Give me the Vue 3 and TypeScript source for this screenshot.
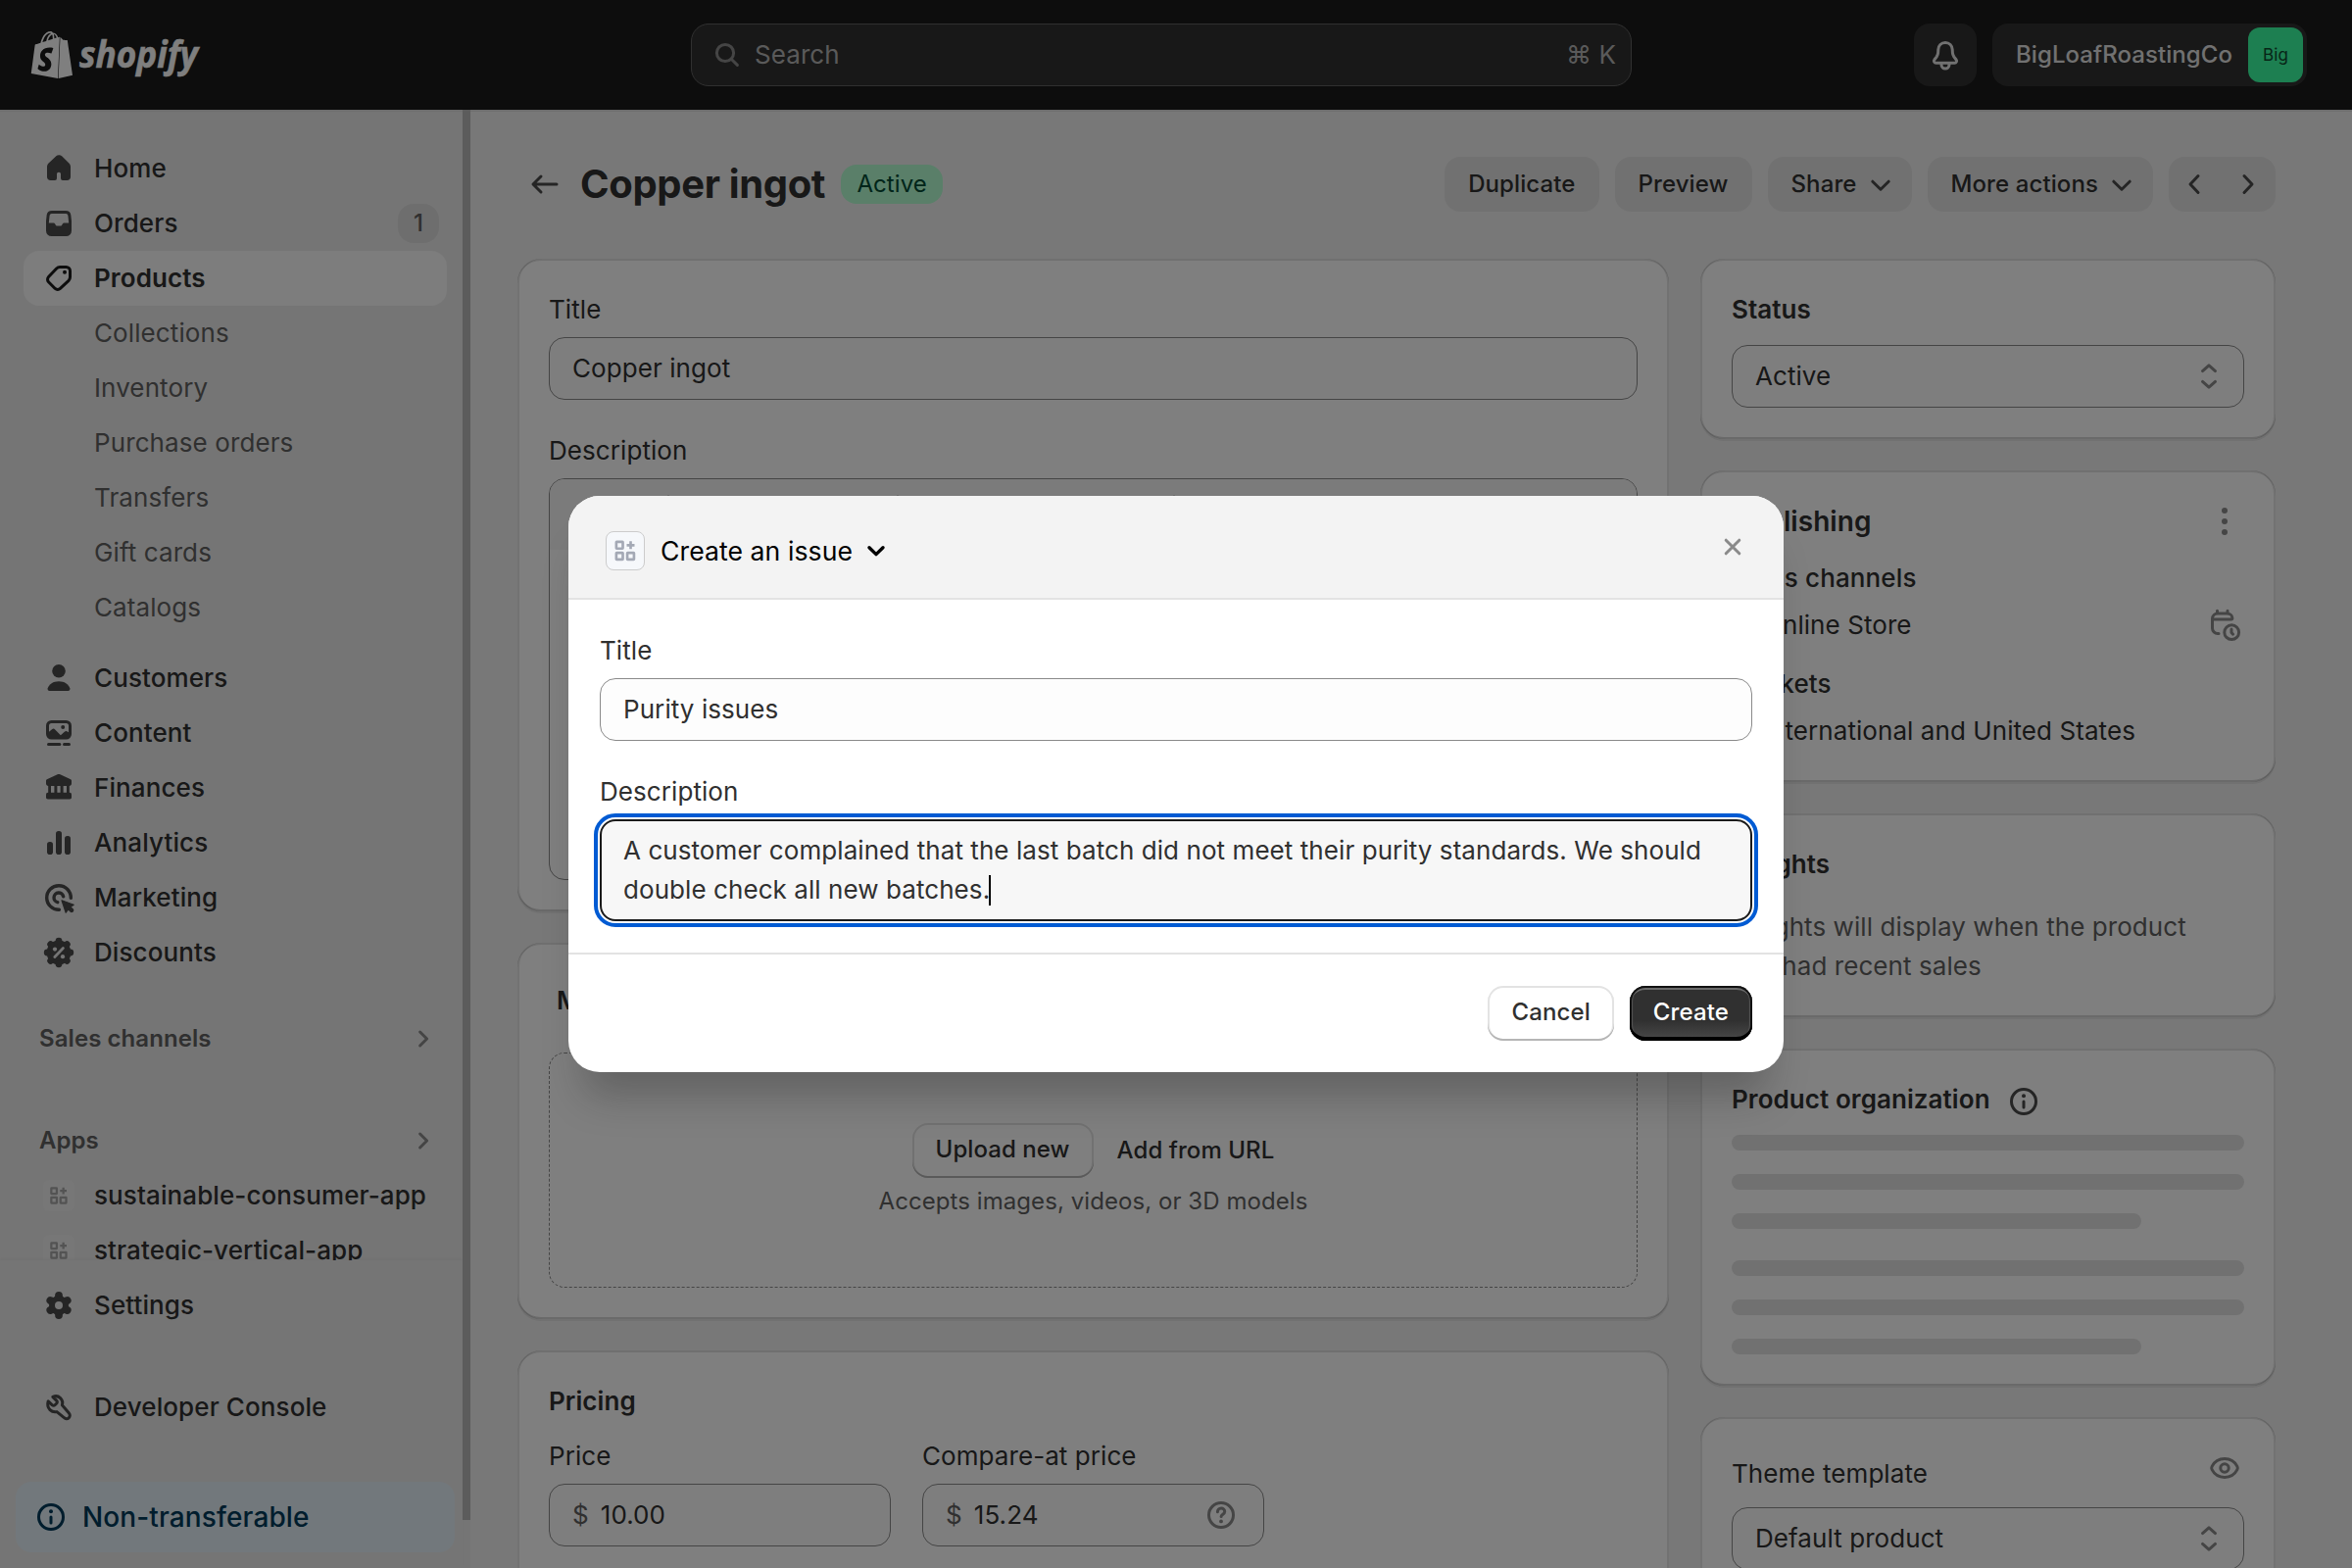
<script setup lang="ts">
interface NavItem {
  label: string
  icon?: string
  badge?: string
  active?: boolean
}

const stroke = 'fill="none" stroke="currentColor" stroke-width="1.5" stroke-linecap="round" stroke-linejoin="round"'
const bumps = [0, 45, 90, 135, 180, 225, 270, 315]
  .map((a) => `<circle cx="10" cy="4.1" r="1.7" transform="rotate(${a} 10 10)"/>`)
  .join('')
const teeth = [0, 60, 120]
  .map((a) => `<path d="M10 5v10" transform="rotate(${a} 10 10)"/>`)
  .join('')

const icons: Record<string, string> = {
  home: '<path fill="currentColor" d="M10 3.1c-.5 0-1 .2-1.35.55L4.8 7.3C4.3 7.8 4 8.45 4 9.15v5.1c0 1 .75 1.75 1.75 1.75H8a1 1 0 0 0 1-1v-2.2a.9.9 0 0 1 .9-.9h.2a.9.9 0 0 1 .9.9V15a1 1 0 0 0 1 1h2.25c1 0 1.75-.75 1.75-1.75v-5.1c0-.7-.3-1.35-.8-1.85l-3.65-3.65A1.9 1.9 0 0 0 10 3.1z"/>',
  orders: '<path fill="currentColor" fill-rule="evenodd" d="M6.4 3.5h7.2a2.6 2.6 0 0 1 2.55 2.1l.35 3.2v4.95a2.75 2.75 0 0 1-2.75 2.75h-7.5a2.75 2.75 0 0 1-2.75-2.75V8.8l.35-3.2A2.6 2.6 0 0 1 6.4 3.5zm0 1.5a1.1 1.1 0 0 0-1.1.95L4.9 9.7h2.3c.55 0 .85.35 1.05.8.2.45.5.8 1.05.8h1.4c.55 0 .85-.35 1.05-.8.2-.45.5-.8 1.05-.8h2.3l-.4-3.75A1.1 1.1 0 0 0 13.6 5z"/>',
  products: `<path ${stroke} d="M10.6 4.25h3.15a2 2 0 0 1 2 2v3.15a2.5 2.5 0 0 1-.73 1.77l-4.3 4.05a1.9 1.9 0 0 1-2.6 0l-3.34-3.34a1.9 1.9 0 0 1 0-2.6l4.05-4.3a2.5 2.5 0 0 1 1.77-.73z"/><circle cx="13" cy="6.9" r="1" fill="currentColor"/>`,
  customers: '<g fill="currentColor"><circle cx="10" cy="6.4" r="3.4"/><path d="M10 11.6c-2.9 0-4.9 1.4-5.65 3.5-.25.8.25 1.4.95 1.4h9.4c.7 0 1.2-.6.95-1.4-.75-2.1-2.75-3.5-5.65-3.5z"/></g>',
  content: '<g fill="currentColor"><path fill-rule="evenodd" d="M6.25 3.5h7.5a2.75 2.75 0 0 1 2.75 2.75v4.25a2.75 2.75 0 0 1-2.75 2.75h-7.5A2.75 2.75 0 0 1 3.5 10.5V6.25A2.75 2.75 0 0 1 6.25 3.5zM6.25 5A1.25 1.25 0 0 0 5 6.25v3.1l1.5-1.2a1.15 1.15 0 0 1 1.6.1l2.85 2.9 1.95-1.8a1.2 1.2 0 0 1 1.5-.1l.6.4V6.25A1.25 1.25 0 0 0 13.75 5z"/><circle cx="12.1" cy="6.95" r="1"/><rect x="4" y="15" width="7.2" height="1.5" rx=".75"/><rect x="12" y="15" width="4" height="1.5" rx=".75"/></g>',
  finances: '<g fill="currentColor"><path d="M10 3c.25 0 .5.05.7.15l5.1 2.3c.45.2.7.55.7.95v1.35c0 .7-.5 1.25-1.2 1.25H4.7c-.7 0-1.2-.55-1.2-1.25V6.4c0-.4.25-.75.7-.95l5.1-2.3c.2-.1.45-.15.7-.15z"/><rect x="4.6" y="8.5" width="1.4" height="5"/><rect x="7.7" y="8.5" width="1.5" height="5"/><rect x="10.8" y="8.5" width="1.5" height="5"/><rect x="14" y="8.5" width="1.4" height="5"/><rect x="3.5" y="12.4" width="13" height="3.4" rx=".9"/></g>',
  analytics: '<g fill="currentColor"><rect x="4" y="9.5" width="3" height="6.5" rx="1.4"/><rect x="8.5" y="4" width="3" height="12" rx="1.4"/><rect x="13" y="6.5" width="3" height="9.5" rx="1.4"/></g>',
  marketing: '<g fill="none" stroke="currentColor" stroke-width="1.7" stroke-linecap="round"><path d="M16.15 10.2A6.15 6.15 0 1 0 10.2 16.15"/><path d="M12.35 9.4A2.45 2.45 0 1 0 9.4 12.35"/></g><path fill="currentColor" stroke="currentColor" stroke-width=".6" stroke-linejoin="round" d="M11.5 11.4l6.1 2.2-1.7 1.1 1.3 1.3c.6.6-.5 1.7-1.1 1.1l-1.3-1.2-1.2 1.7z"/>',
  discounts: `<g fill="currentColor"><circle cx="10" cy="10" r="6.2"/>${bumps}</g><g fill="#ebebeb"><path d="M7.9 12.2l4.3-4.4" stroke="#ebebeb" stroke-width="1.4" stroke-linecap="round"/><circle cx="8" cy="8.3" r="1.05"/><circle cx="12" cy="12.1" r="1.05"/></g>`,
  settings: `<g fill="none" stroke="currentColor" stroke-width="3.9" stroke-linecap="round">${teeth}</g><circle cx="10" cy="10" r="5" fill="currentColor"/><circle cx="10" cy="10" r="2" fill="#ebebeb"/>`,
  wrench: `<path ${stroke} d="M6.9 4.7l2 2a.9.9 0 0 1 0 1.3l-.9.9a.9.9 0 0 1-1.3 0l-2.1-2c-.55 1.8-.2 3.3.9 4.4 1 1 2.3 1.25 3.5 1l3.7 3a1.6 1.6 0 0 0 2.5-2.3l-3.5-4.1c.4-1.3.1-2.6-.9-3.6-1.05-1.05-2.5-1.2-3.9-.6z"/>`,
  search: `<path ${stroke} d="M12.1 12.1l3.1 3.1M13.3 9a4.3 4.3 0 1 1-8.6 0 4.3 4.3 0 0 1 8.6 0z"/>`,
  bell: `<path ${stroke} d="M10 3.75c-2.1 0-3.5 1.6-3.6 3.5l-.1 1.7c-.05.7-.3 1.35-.7 1.95l-1.2 1.6c-.5.7 0 1.65.85 1.65h9.5c.85 0 1.35-.95.85-1.65l-1.2-1.6c-.4-.6-.65-1.25-.7-1.95l-.1-1.7c-.1-1.9-1.5-3.5-3.6-3.5zM8 14.3v.7a2 2 0 0 0 4 0v-.7"/>`,
  back: `<path ${stroke} d="M16 10H4.25M8 6L4 10l4 4"/>`,
  down: `<path ${stroke} d="M5.9 8.6L10 12.6l4.1-4"/>`,
  caret: `<path fill="none" stroke="currentColor" stroke-width="1.7" stroke-linecap="round" stroke-linejoin="round" d="M6.5 8.4L10 11.8l3.5-3.4"/>`,
  left: `<path ${stroke} d="M11.5 5.75L7.5 10l4 4.25"/>`,
  right: `<path ${stroke} d="M8.5 5.75l4 4.25-4 4.25"/>`,
  smallRight: `<path ${stroke} d="M8.3 6.5L11.8 10l-3.5 3.5"/>`,
  select: `<path ${stroke} d="M6.75 7.3L10 4.4l3.25 2.9M6.75 12.7L10 15.6l3.25-2.9"/>`,
  info: `<circle cx="10" cy="10" r="6.25" ${stroke}/><path ${stroke} d="M10 10v3"/><circle cx="10" cy="7.1" r="1" fill="currentColor"/>`,
  help: `<circle cx="10" cy="10" r="6.25" ${stroke}/><path ${stroke} d="M8.2 8.4c0-1.1.8-1.9 1.85-1.9s1.8.75 1.8 1.7c0 1.4-1.8 1.4-1.8 2.6"/><circle cx="10" cy="13.2" r=".95" fill="currentColor"/>`,
  dots: '<g fill="currentColor"><circle cx="10" cy="4.5" r="1.5"/><circle cx="10" cy="10" r="1.5"/><circle cx="10" cy="15.5" r="1.5"/></g>',
  eye: `<path ${stroke} d="M10 5.3c-3.1 0-5.3 1.7-6.45 3.9-.3.55-.3 1.05 0 1.6C4.7 13 6.9 14.7 10 14.7s5.3-1.7 6.45-3.9c.3-.55.3-1.05 0-1.6C15.3 7 13.1 5.3 10 5.3z"/><circle cx="10" cy="10" r="2.1" ${stroke}/>`,
  schedule: `<path ${stroke} d="M7 14.25h-.5a2.75 2.75 0 0 1-2.75-2.75V6.75A2.75 2.75 0 0 1 6.5 4h4.7c1.5 0 2.75 1 2.75 2.4 0 .4-.2.6-.6.6H3.9M6.25 2.6V4M11.5 2.6V4"/><circle cx="13.6" cy="13.6" r="3.7" ${stroke}/><path ${stroke} d="M13.5 12v1.7l.8.9"/>`,
  close: `<path ${stroke} d="M6.6 6.6l6.8 6.8M13.4 6.6l-6.8 6.8"/>`,
  app: '<g fill="none" stroke="currentColor" stroke-width="1.4"><rect x="5.2" y="5.2" width="3.5" height="3.6" rx=".2"/><rect x="5.2" y="11.1" width="3.5" height="3.6" rx=".2"/><rect x="11.1" y="11.1" width="3.6" height="3.6" rx=".2"/><path d="M12.9 4.9v4.2M10.8 7h4.2"/></g>',
}

const primary: NavItem[] = [
  { label: 'Home', icon: 'home' },
  { label: 'Orders', icon: 'orders', badge: '1' },
  { label: 'Products', icon: 'products', active: true },
]
const productLinks: string[] = ['Collections', 'Inventory', 'Purchase orders', 'Transfers', 'Gift cards', 'Catalogs']
const secondary: NavItem[] = [
  { label: 'Customers', icon: 'customers' },
  { label: 'Content', icon: 'content' },
  { label: 'Finances', icon: 'finances' },
  { label: 'Analytics', icon: 'analytics' },
  { label: 'Marketing', icon: 'marketing' },
  { label: 'Discounts', icon: 'discounts' },
]
const apps: string[] = ['sustainable-consumer-app', 'strategic-vertical-app']
const bagPath =
  'M15.337 23.979l7.216-1.561s-2.604-17.613-2.625-17.73c-.018-.116-.114-.192-.211-.192s-1.929-.136-1.929-.136-1.275-1.274-1.439-1.411c-.045-.037-.075-.057-.121-.074l-.914 21.104h.023zM11.71 11.305s-.81-.424-1.774-.424c-1.447 0-1.504.906-1.504 1.141 0 1.232 3.24 1.715 3.24 4.629 0 2.295-1.44 3.76-3.406 3.76-2.354 0-3.54-1.465-3.54-1.465l.646-2.086s1.245 1.066 2.28 1.066c.675 0 .975-.545.975-.932 0-1.619-2.654-1.694-2.654-4.359-.034-2.237 1.571-4.416 4.827-4.416 1.257 0 1.875.361 1.875.361l-.945 2.715-.02.01zM11.17.83c.136 0 .271.038.405.135-.984.465-2.064 1.639-2.508 3.992-.656.213-1.293.405-1.889.578C7.697 3.75 8.951.84 11.17.84V.83zm1.235 2.949v.135c-.754.232-1.583.484-2.394.736.466-1.777 1.333-2.645 2.085-2.971.193.501.309 1.176.309 2.1zm.539-2.234c.694.074 1.141.867 1.429 1.755-.349.114-.735.231-1.158.366v-.252c0-.752-.096-1.371-.271-1.871v.002zm2.992 1.289c-.02 0-.06.021-.078.021s-.289.075-.714.21c-.423-1.233-1.176-2.37-2.508-2.37h-.115C12.135.209 11.669 0 11.265 0 8.159 0 6.675 3.877 6.21 5.846c-1.194.365-2.063.636-2.16.674-.675.213-.694.232-.772.87-.075.462-1.83 14.063-1.83 14.063L15.009 24l.927-21.166z'
</script>

<template>
  <div class="frame">
    <header class="topbar">
      <div class="logo">
        <svg class="bag" viewBox="0 0 24 24"><path :d="bagPath" fill="currentColor" /></svg>
        <svg class="wordmark" viewBox="0 0 126 52">
          <text x="2" y="39" textLength="121" lengthAdjust="spacingAndGlyphs" fill="currentColor">shopify</text>
        </svg>
      </div>
      <div class="search">
        <svg class="icon" viewBox="0 0 20 20" v-html="icons.search" />
        <span class="placeholder">Search</span>
        <span class="keys">⌘ K</span>
      </div>
      <div class="bell"><svg class="icon" viewBox="0 0 20 20" v-html="icons.bell" /></div>
      <div class="account">
        <span>BigLoafRoastingCo</span>
        <span class="avatar">Big</span>
      </div>
    </header>

    <div class="body">
      <aside class="sidebar">
        <div class="side-content">
          <nav class="nav-scroll">
            <div v-for="item in primary" :key="item.label" class="nav-item" :class="{ active: item.active }">
              <svg class="icon" viewBox="0 0 20 20" v-html="icons[item.icon!]" />
              <span>{{ item.label }}</span>
              <span v-if="item.badge" class="count">{{ item.badge }}</span>
            </div>
            <div v-for="link in productLinks" :key="link" class="nav-item sub">{{ link }}</div>
            <div class="nav-gap"></div>
            <div v-for="item in secondary" :key="item.label" class="nav-item">
              <svg class="icon" viewBox="0 0 20 20" v-html="icons[item.icon!]" />
              <span>{{ item.label }}</span>
            </div>
            <div class="nav-section">
              <span>Sales channels</span><svg class="icon" viewBox="0 0 20 20" v-html="icons.smallRight" />
            </div>
            <div class="nav-section second">
              <span>Apps</span><svg class="icon" viewBox="0 0 20 20" v-html="icons.smallRight" />
            </div>
            <div v-for="app in apps" :key="app" class="nav-item">
              <span class="app-tile"><svg viewBox="0 0 20 20" v-html="icons.app" /></span>
              <span>{{ app }}</span>
            </div>
          </nav>
          <div class="nav-bottom">
            <div class="nav-item"><svg class="icon" viewBox="0 0 20 20" v-html="icons.settings" /><span>Settings</span></div>
            <div class="nav-item console"><svg class="icon" viewBox="0 0 20 20" v-html="icons.wrench" /><span>Developer Console</span></div>
            <div class="notice"><svg class="icon" viewBox="0 0 20 20" v-html="icons.info" /><span>Non-transferable</span></div>
          </div>
        </div>
        <div class="scrollbar"></div>
      </aside>

      <main class="main">
        <div class="page-head">
          <svg class="icon back" viewBox="0 0 20 20" v-html="icons.back" />
          <h1>Copper ingot</h1>
          <span class="status">Active</span>
          <div class="actions">
            <span class="action">Duplicate</span>
            <span class="action">Preview</span>
            <span class="action menu">Share<svg class="icon" viewBox="0 0 20 20" v-html="icons.down" /></span>
            <span class="action menu">More actions<svg class="icon" viewBox="0 0 20 20" v-html="icons.down" /></span>
            <span class="action pager">
              <svg class="icon" viewBox="0 0 20 20" v-html="icons.left" />
              <svg class="icon" viewBox="0 0 20 20" v-html="icons.right" />
            </span>
          </div>
        </div>

        <div class="columns">
          <div class="col">
            <section class="card">
              <div class="label">Title</div>
              <div class="input">Copper ingot</div>
              <div class="label spaced">Description</div>
              <div class="editor">
                <div class="toolbar"><i class="s1"></i><i class="s2"></i><i class="s3"></i></div>
              </div>
            </section>
            <section class="card">
              <div class="media-title">Media</div>
              <div class="dropzone">
                <div class="drop-actions"><span class="outlined">Upload new</span><span>Add from URL</span></div>
                <div class="hint">Accepts images, videos, or 3D models</div>
              </div>
            </section>
            <section class="card tail">
              <div class="heading">Pricing</div>
              <div class="prices">
                <div>
                  <div class="label">Price</div>
                  <div class="input"><span class="currency">$</span>10.00</div>
                </div>
                <div>
                  <div class="label">Compare-at price</div>
                  <div class="input"><span class="currency">$</span>15.24<svg class="icon end help" viewBox="0 0 20 20" v-html="icons.help" /></div>
                </div>
              </div>
            </section>
          </div>

          <div class="col">
            <section class="card">
              <div class="heading">Status</div>
              <div class="input">Active<svg class="icon end" viewBox="0 0 20 20" v-html="icons.select" /></div>
            </section>
            <section class="card">
              <div class="row pub-title"><span>Publishing</span><svg class="icon soft" viewBox="0 0 20 20" v-html="icons.dots" /></div>
              <div class="row medium">Sales channels</div>
              <div class="row item"><span>Online Store</span><svg class="icon soft" viewBox="0 0 20 20" v-html="icons.schedule" /></div>
              <div class="row medium markets">Markets</div>
              <div class="row item">International and United States</div>
            </section>
            <section class="card">
              <div class="heading">Insights</div>
              <p class="insight">Insights will display when the product<br />has had recent sales</p>
            </section>
            <section class="card">
              <div class="heading org">Product organization<svg class="icon" viewBox="0 0 20 20" v-html="icons.info" /></div>
              <div class="skeleton"><i></i><i></i><i></i></div>
              <div class="skeleton"><i></i><i></i><i></i></div>
            </section>
            <section class="card tail">
              <div class="template"><span>Theme template</span><svg class="icon soft" viewBox="0 0 20 20" v-html="icons.eye" /></div>
              <div class="input">Default product<svg class="icon end" viewBox="0 0 20 20" v-html="icons.select" /></div>
            </section>
          </div>
        </div>
      </main>
    </div>

    <div class="backdrop">
      <div class="modal">
        <div class="modal-head">
          <span class="modal-app"><svg viewBox="0 0 20 20" v-html="icons.app" /></span>
          <span class="modal-title">Create an issue</span>
          <svg class="modal-caret" viewBox="0 0 20 20" v-html="icons.caret" />
          <svg class="modal-close" viewBox="0 0 20 20" v-html="icons.close" />
        </div>
        <div class="modal-body">
          <div class="label">Title</div>
          <div class="input">Purity issues</div>
          <div class="label spaced">Description</div>
          <div class="textarea">A customer complained that the last batch did not meet their purity standards. We should<br />double check all new batches.<i class="cursor"></i></div>
        </div>
        <div class="modal-foot">
          <span class="btn cancel">Cancel</span>
          <span class="btn create">Create</span>
        </div>
      </div>
    </div>
  </div>
</template>

<style>
html,
body {
  margin: 0;
  overflow: hidden;
}
</style>

<style scoped>
.frame {
  position: relative;
  width: 2400px;
  height: 1600px;
  overflow: hidden;
  display: flex;
  flex-direction: column;
  background: #f1f1f1;
  font-family: Inter, "Liberation Sans", sans-serif;
  font-size: 26px;
  line-height: 40px;
  font-weight: 400;
  letter-spacing: 0.07px;
  color: #303030;
}
.frame * {
  box-sizing: border-box;
}
.icon {
  width: 40px;
  height: 40px;
  flex: none;
  display: block;
  color: #4a4a4a;
}
.icon.soft,
.icon.end {
  color: #8a8a8a;
}

/* Top bar */
.topbar {
  height: 112px;
  flex: none;
  background: #1a1a1a;
  display: flex;
  align-items: center;
}
.logo {
  width: 705px;
  padding-left: 29px;
  display: flex;
  align-items: center;
  color: #fff;
}
.bag {
  width: 48px;
  height: 48px;
}
.wordmark {
  width: 126px;
  height: 52px;
  margin-left: 2px;
  overflow: visible;
}
.wordmark text {
  font: italic 700 38px "Open Sans", "Noto Sans", sans-serif;
  letter-spacing: 0;
  stroke: currentColor;
  stroke-width: 0.6px;
}
.search {
  width: 960px;
  height: 64px;
  border: 1px solid #616161;
  border-radius: 18px;
  background: #303030;
  color: #b5b5b5;
  display: flex;
  align-items: center;
  padding: 0 15px 0 16px;
}
.search .icon {
  color: #8a8a8a;
}
.placeholder {
  margin-left: 8px;
}
.keys {
  margin-left: auto;
}
.bell {
  margin-left: 288px;
  width: 64px;
  height: 64px;
  border-radius: 16px;
  background: #303030;
  display: flex;
  align-items: center;
  justify-content: center;
}
.bell .icon {
  color: #e3e3e3;
}
.account {
  margin-left: 16px;
  width: 321px;
  height: 64px;
  border-radius: 16px;
  background: #303030;
  color: #e3e3e3;
  padding: 0 4px 0 24px;
  display: flex;
  align-items: center;
  justify-content: space-between;
  font-size: 24px;
  font-weight: 500;
}
.avatar {
  width: 56px;
  height: 56px;
  border-radius: 12px;
  background: #3affa2;
  color: #0f4a2f;
  font-size: 17px;
  font-weight: 400;
  line-height: 56px;
  text-align: center;
}

/* Sidebar */
.body {
  flex: 1;
  display: flex;
  box-shadow: inset 0 2px 0 #dedede;
}
.sidebar {
  width: 480px;
  height: 1488px;
  background: #ebebeb;
  box-shadow: inset 0 2px 0 #dedede;
  display: flex;
  flex: none;
}
.side-content {
  width: 472px;
  display: flex;
  flex-direction: column;
}
.scrollbar {
  width: 8px;
  height: 1439px;
  background: #b8b8b8;
}
.nav-scroll {
  height: 1174px;
  padding: 32px 16px 0 24px;
  overflow: hidden;
  flex: none;
}
.nav-item {
  height: 56px;
  padding: 0 8px 0 16px;
  display: flex;
  align-items: center;
  border-radius: 16px;
  font-weight: 500;
  letter-spacing: 0.1px;
}
.nav-item .icon + span,
.app-tile + span {
  margin-left: 16px;
}
.nav-item.active {
  background: #fafafa;
  font-weight: 600;
}
.nav-item.active .icon {
  color: #1a1a1a;
}
.nav-item.sub {
  padding-left: 72px;
  font-weight: 400;
  color: #616161;
}
.count {
  margin-left: auto;
  width: 42px;
  height: 40px;
  border-radius: 16px;
  background: #dcdcdc;
  color: #616161;
  font-size: 24px;
  font-weight: 500;
  text-align: center;
}
.nav-gap {
  height: 16px;
}
.nav-section {
  margin-top: 40px;
  padding: 0 4px 0 16px;
  height: 40px;
  display: flex;
  align-items: center;
  justify-content: space-between;
  color: #616161;
  font-size: 24px;
  font-weight: 600;
}
.nav-section .icon {
  color: #8a8a8a;
}
.nav-section.second {
  margin-top: 64px;
  margin-bottom: 8px;
}
.app-tile {
  width: 32px;
  height: 32px;
  margin: 0 4px;
  border-radius: 6px;
  background: #eeeeee;
  color: #a6a6a6;
  flex: none;
}
.app-tile svg {
  display: block;
  width: 32px;
  height: 32px;
}
.nav-bottom {
  flex: 1;
  padding: 18px 8px 0 16px;
  box-shadow: 0 -2px 2px rgba(0, 0, 0, 0.03);
}
.nav-bottom .nav-item {
  padding-left: 24px;
}
.console {
  margin-top: 48px;
}
.notice {
  margin-top: 48px;
  height: 72px;
  border-radius: 16px;
  background: #e4f0f8;
  color: #003a5a;
  font-size: 28px;
  font-weight: 500;
  letter-spacing: 0.12px;
  display: flex;
  align-items: center;
  padding-left: 16px;
}
.notice .icon {
  color: #003a5a;
}
.notice span {
  margin-left: 12px;
}

/* Product page */
.main {
  flex: 1;
  padding: 48px 78px 0 48px;
  display: flex;
  flex-direction: column;
}
.page-head {
  height: 56px;
  display: flex;
  align-items: center;
  padding-left: 8px;
}
h1 {
  margin: 0 16px;
  font-size: 40px;
  line-height: 48px;
  font-weight: 650;
  letter-spacing: -0.35px;
}
.status {
  width: 104px;
  height: 40px;
  text-align: center;
  border-radius: 16px;
  background: #b4fed2;
  color: #014b34;
  font-size: 24px;
}
.actions {
  margin-left: auto;
  display: flex;
  gap: 16px;
}
.action {
  height: 56px;
  padding: 0 24px;
  border-radius: 16px;
  background: #e3e3e3;
  font-size: 24px;
  font-weight: 500;
  letter-spacing: 0.1px;
  display: flex;
  align-items: center;
}
.action.menu {
  padding-right: 12px;
}
.action.menu .icon {
  margin-left: 4px;
}
.action.pager {
  width: 109px;
  padding: 0 9px 0 7px;
  justify-content: space-between;
}
.columns {
  margin-top: 48px;
  display: grid;
  grid-template-columns: 1175px 587px;
  gap: 32px;
}
.col {
  display: flex;
  flex-direction: column;
  gap: 32px;
}
.card {
  padding: 32px;
  border-radius: 24px;
  background: #fff;
  box-shadow: inset 2px 0 0 rgba(0, 0, 0, 0.1), inset -2px 0 0 rgba(0, 0, 0, 0.1),
    inset 0 -2px 0 rgba(0, 0, 0, 0.17), inset 0 2px 0 rgba(180, 180, 180, 0.4), 0 2px 0 rgba(26, 26, 26, 0.07);
}
.card.tail {
  padding-bottom: 60px;
}
.label {
  height: 40px;
}
.label.spaced {
  margin-top: 32px;
}
.input {
  margin-top: 8px;
  height: 64px;
  border: 1.5px solid #8a8a8a;
  border-radius: 16px;
  padding: 0 22px 0 23px;
  background: #fdfdfd;
  display: flex;
  align-items: center;
}
.input .end {
  margin-left: auto;
  margin-right: -7px;
}
.input .help {
  margin-right: 1px;
}
.currency {
  color: #616161;
  margin-right: 12px;
}
.editor {
  margin-top: 8px;
  height: 410px;
  border: 1.5px solid #8a8a8a;
  border-radius: 16px;
  overflow: hidden;
}
.toolbar {
  height: 72px;
  background: #f7f7f7;
  display: flex;
}
.toolbar i {
  width: 2px;
  height: 40px;
  margin-top: 16px;
  background: #d4d4d4;
}
.toolbar .s1 {
  margin-left: 120px;
}
.toolbar .s2 {
  margin-left: 232px;
}
.toolbar .s3 {
  margin-left: 280px;
}
.heading {
  font-weight: 600;
}
.heading + .input {
  margin-top: 16px;
}
.media-title {
  height: 80px;
  padding-left: 8px;
  line-height: 54px;
  font-weight: 600;
}
.dropzone {
  height: 240px;
  border: 1.5px dashed #8a8a8a;
  border-radius: 16px;
  padding-top: 71px;
  display: flex;
  flex-direction: column;
  align-items: center;
}
.drop-actions {
  display: flex;
  align-items: center;
  gap: 24px;
  font-size: 24px;
  font-weight: 500;
}
.outlined {
  height: 56px;
  line-height: 54px;
  padding: 0 24px;
  border-radius: 16px;
  box-shadow: inset 0 -2px 0 #b5b5b5, inset 0 0 0 2px #e3e3e3;
}
.hint {
  margin-top: 4px;
  font-size: 24px;
  color: #616161;
}
.prices {
  margin-top: 16px;
  display: grid;
  grid-template-columns: repeat(3, 1fr);
  gap: 32px;
}
.row {
  height: 40px;
  display: flex;
  align-items: center;
  justify-content: space-between;
}
.pub-title {
  font-size: 28px;
  font-weight: 600;
  margin-bottom: 18px;
}
.medium {
  font-weight: 500;
  letter-spacing: 0.12px;
  margin-bottom: 8px;
}
.markets {
  margin-top: 20px;
}
.item {
  padding-left: 32px;
}
.insight {
  margin: 24px 0 0;
  color: #616161;
}
.org {
  display: flex;
  align-items: center;
}
.org .icon {
  margin: 2px 0 -2px 14px;
}
.skeleton {
  margin-top: 16px;
  display: flex;
  flex-direction: column;
  gap: 24px;
}
.skeleton + .skeleton {
  margin-top: 32px;
}
.skeleton i {
  height: 16px;
  border-radius: 8px;
  background: #e3e3e3;
}
.skeleton i:last-child {
  width: 80%;
}
.template {
  height: 52px;
  display: flex;
  justify-content: space-between;
  line-height: 52px;
}

/* Dialog */
.backdrop {
  position: absolute;
  inset: 0;
  background: rgba(0, 0, 0, 0.5);
  display: flex;
  align-items: center;
  justify-content: center;
}
.modal {
  width: 1240px;
  height: 588px;
  border-radius: 32px;
  background: #fff;
  box-shadow: 0 40px 40px -16px rgba(26, 26, 26, 0.28);
  display: flex;
  flex-direction: column;
}
.modal-head {
  height: 106px;
  padding: 8px 32px 0 38px;
  border-bottom: 2px solid #e3e3e3;
  border-radius: 32px 32px 0 0;
  background: #f3f3f3;
  display: flex;
  align-items: center;
  color: #000;
}
.modal-app {
  width: 40px;
  height: 40px;
  border: 1.5px solid #ccc;
  border-radius: 8px;
  background: #f6f8fb;
  color: #a4a9b5;
}
.modal-app svg {
  display: block;
  width: 38px;
  height: 38px;
}
.modal-title {
  margin-left: 16px;
  font-size: 26.6px;
}
.modal-caret {
  width: 40px;
  height: 40px;
  margin-left: 4px;
}
.modal-close {
  width: 40px;
  height: 40px;
  margin: -9px 0 0 auto;
  color: #8a8a8a;
}
.modal-body {
  flex: 1;
  padding: 32px;
}
.textarea {
  margin-top: 8px;
  height: 104px;
  padding: 10px 22px;
  border: 2px solid #1a1a1a;
  border-radius: 16px;
  background: #f7f7f7;
  outline: 4px solid #005bd3;
  outline-offset: 2px;
  white-space: nowrap;
}
.cursor {
  display: inline-block;
  width: 2px;
  height: 31px;
  margin-left: -1px;
  background: #000;
  vertical-align: -7px;
}
.modal-foot {
  height: 122px;
  border-top: 2px solid #e3e3e3;
  padding: 32px;
  display: flex;
  justify-content: flex-end;
  gap: 16px;
}
.btn {
  height: 56px;
  padding: 0 24px;
  border-radius: 16px;
  font-size: 24px;
  font-weight: 500;
  letter-spacing: 0.12px;
  line-height: 54px;
}
.cancel {
  box-shadow: inset 0 -2px 0 #b5b5b5, inset 0 0 0 2px #e3e3e3;
}
.create {
  color: #fff;
  background: linear-gradient(180deg, #303030 63%, #4a4a4a 100%);
  box-shadow: inset 0 -4px 0 #000, inset 0 0 0 2px #111, inset 0 4px 0 #6a6a6a, inset 4px 0 1px -1px #555, inset -4px 0 1px -1px #555;
}
</style>
